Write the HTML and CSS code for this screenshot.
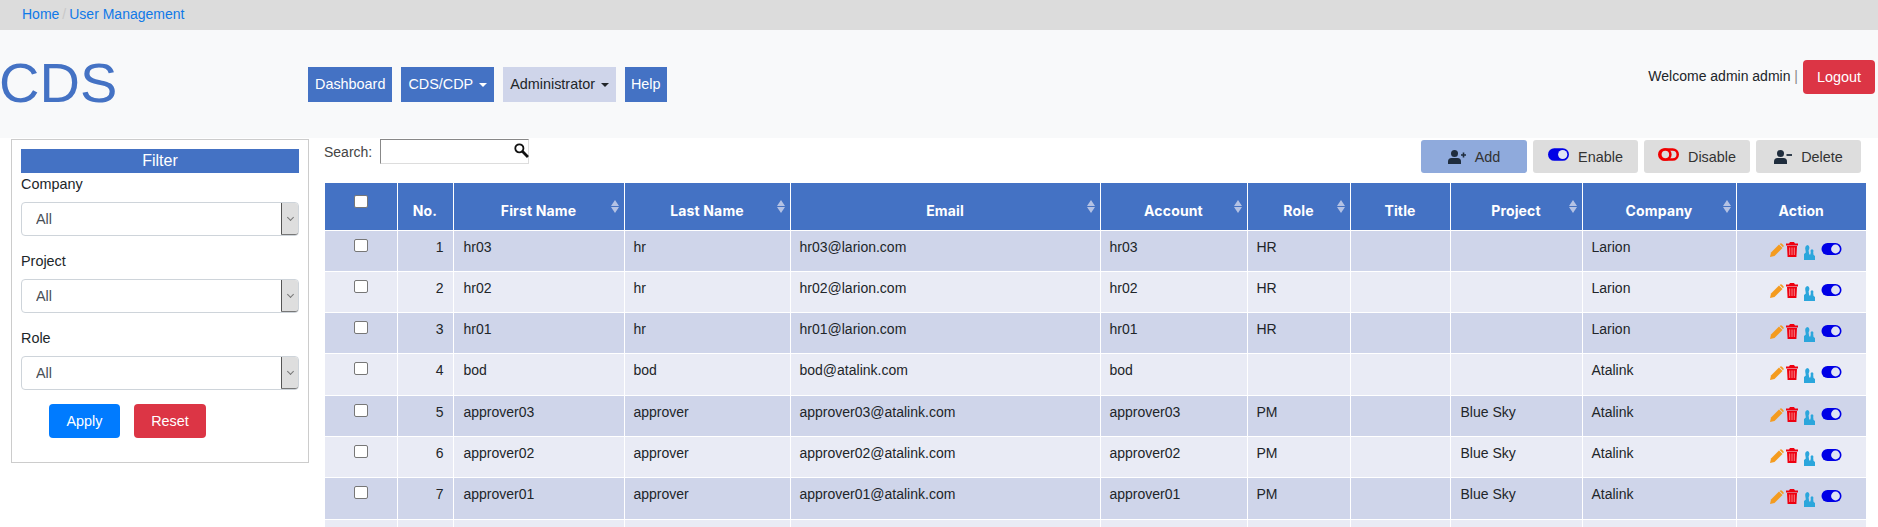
FILE: index.html
```html
<!DOCTYPE html>
<html lang="en">
<head>
    <meta charset="UTF-8">
    <title>User Management</title>
    <link rel="stylesheet" href="styles.css">
</head>
<body>
    <svg class="sprites" width="0" height="0">
        <symbol id="icon-pencil" viewBox="0 0 14 14">
            <path d="M0 14 L1 9.5 L9 1.5 L12.5 5 L4.5 13 Z" fill="#f49b1f"/>
            <path d="M10 .8 Q11 -.2 12 .8 L13.2 2 Q14.2 3 13.2 4 L13 4.3 L9.7 1 Z" fill="#f49b1f"/>
        </symbol>
        <symbol id="icon-trash" viewBox="0 0 12 15">
            <path d="M4 0 H8 L9 1.5 H12 V3.4 H0 V1.5 H3 Z M1 4 H11 L10.4 15 H1.6 Z" fill="#ee0010"/>
            <path d="M3.7 5.5 V13 M6 5.5 V13 M8.3 5.5 V13" stroke="#f7a4a8" stroke-width=".8"/>
        </symbol>
        <symbol id="icon-users" viewBox="0 0 11 15">
            <path d="M3.2 0 Q5.4 0 5.4 2.6 Q5.4 4.2 4.6 5.6 L5.2 9.5 H6.4 L6.8 7 Q6.2 5.6 7 4.8 Q8 3.8 9 4.8 Q9.8 5.6 9.2 7 L9.5 9.8 L11 11 V15 H0 V9 L1.8 7.4 Q1.6 5.4 1.3 4.2 Q.7 1 3.2 0 Z" fill="#2ba6dc"/>
        </symbol>
        <symbol id="icon-toggle" viewBox="0 0 20 12">
            <rect width="20" height="12" rx="6" fill="#0000e6"/>
            <circle cx="14" cy="6" r="4.4" fill="#dfe3f4"/>
        </symbol>
        <symbol id="icon-toggle-off" viewBox="0 0 20 12">
            <rect x="1.2" y="1.2" width="17.6" height="9.6" rx="4.8" fill="none" stroke="#f00000" stroke-width="2.4"/>
            <circle cx="7" cy="6" r="4.8" fill="#dddddd" stroke="#f00000" stroke-width="2.4"/>
        </symbol>
        <symbol id="icon-user-plus" viewBox="0 0 18 14">
            <circle cx="6.5" cy="3.5" r="3.5" fill="#1f2d3d"/>
            <path d="M0 14 V11.5 Q0 8 3.5 8 H9.5 Q13 8 13 11.5 V14 Z" fill="#1f2d3d"/>
            <path d="M13 5 H18 M15.5 2.5 V7.5" stroke="#1f2d3d" stroke-width="1.6"/>
        </symbol>
        <symbol id="icon-user-minus" viewBox="0 0 18 14">
            <circle cx="6.5" cy="3.5" r="3.5" fill="#1f2d3d"/>
            <path d="M0 14 V11.5 Q0 8 3.5 8 H9.5 Q13 8 13 11.5 V14 Z" fill="#1f2d3d"/>
            <path d="M12.5 5 H18" stroke="#1f2d3d" stroke-width="1.8"/>
        </symbol>
    </svg>

    <div class="breadcrumb">
        <a href="#">Home</a>
        <span class="divider">/</span>
        <a href="#">User Management</a>
    </div>

    <header class="topbar">
        <div class="logo">CDS</div>
        <nav class="menu">
            <a class="menu-item" href="#">Dashboard</a>
            <a class="menu-item caret" href="#">CDS/CDP</a>
            <a class="menu-item caret active" href="#">Administrator</a>
            <a class="menu-item menu-help" href="#">Help</a>
        </nav>
        <div class="welcome">
            <span class="welcome-text">Welcome admin admin <span class="sep">|</span></span>
            <button class="btn btn-red logout">Logout</button>
        </div>
    </header>

    <main class="main">
        <aside class="filter">
            <div class="filter-title">Filter</div>
            <label class="filter-label">Company</label>
            <div class="select-wrap"><select><option>All</option></select><span class="select-arrow"></span></div>
            <label class="filter-label">Project</label>
            <div class="select-wrap"><select><option>All</option></select><span class="select-arrow"></span></div>
            <label class="filter-label">Role</label>
            <div class="select-wrap"><select><option>All</option></select><span class="select-arrow"></span></div>
            <div class="filter-actions">
                <button class="btn btn-blue">Apply</button>
                <button class="btn btn-red">Reset</button>
            </div>
        </aside>

        <section class="content">
            <div class="tools">
                <div class="search">
                    <label>Search:</label>
                    <div class="search-box">
                        <input type="text">
                        <svg class="search-icon" viewBox="0 0 14 14" width="15" height="15">
                            <circle cx="5" cy="5" r="3.8" fill="none" stroke="#111" stroke-width="1.7"/>
                            <path d="M8 8 L13 13" stroke="#111" stroke-width="2.6"/>
                        </svg>
                    </div>
                </div>
                <div class="tool-buttons">
                    <button class="tool tool-add"><svg class="tool-icon"><use href="#icon-user-plus"/></svg>Add</button>
                    <button class="tool"><svg class="toggle-icon"><use href="#icon-toggle"/></svg>Enable</button>
                    <button class="tool"><svg class="toggle-icon"><use href="#icon-toggle-off"/></svg>Disable</button>
                    <button class="tool"><svg class="tool-icon"><use href="#icon-user-minus"/></svg>Delete</button>
                </div>
            </div>

            <table class="users">
                <colgroup>
                    <col class="c-check"><col class="c-no"><col class="c-first"><col class="c-last"><col class="c-email"><col class="c-account"><col class="c-role"><col class="c-title"><col class="c-project"><col class="c-company"><col class="c-action">
                </colgroup>
                <thead>
                    <tr>
                        <th class="check-head"><input type="checkbox"></th>
                        <th>No.</th>
                        <th class="sort">First Name</th>
                        <th class="sort">Last Name</th>
                        <th class="sort">Email</th>
                        <th class="sort">Account</th>
                        <th class="sort">Role</th>
                        <th>Title</th>
                        <th class="sort">Project</th>
                        <th class="sort">Company</th>
                        <th>Action</th>
                    </tr>
                </thead>
                <tbody>
                    <tr>
                        <td class="check"><input type="checkbox"></td><td class="num">1</td><td>hr03</td><td>hr</td><td>hr03@larion.com</td><td>hr03</td><td>HR</td><td></td><td></td><td>Larion</td>
                        <td class="actions"><svg class="a-pencil"><use href="#icon-pencil"/></svg><svg class="a-trash"><use href="#icon-trash"/></svg><svg class="a-users"><use href="#icon-users"/></svg><svg class="a-toggle"><use href="#icon-toggle"/></svg></td>
                    </tr>
                    <tr>
                        <td class="check"><input type="checkbox"></td><td class="num">2</td><td>hr02</td><td>hr</td><td>hr02@larion.com</td><td>hr02</td><td>HR</td><td></td><td></td><td>Larion</td>
                        <td class="actions"><svg class="a-pencil"><use href="#icon-pencil"/></svg><svg class="a-trash"><use href="#icon-trash"/></svg><svg class="a-users"><use href="#icon-users"/></svg><svg class="a-toggle"><use href="#icon-toggle"/></svg></td>
                    </tr>
                    <tr>
                        <td class="check"><input type="checkbox"></td><td class="num">3</td><td>hr01</td><td>hr</td><td>hr01@larion.com</td><td>hr01</td><td>HR</td><td></td><td></td><td>Larion</td>
                        <td class="actions"><svg class="a-pencil"><use href="#icon-pencil"/></svg><svg class="a-trash"><use href="#icon-trash"/></svg><svg class="a-users"><use href="#icon-users"/></svg><svg class="a-toggle"><use href="#icon-toggle"/></svg></td>
                    </tr>
                    <tr>
                        <td class="check"><input type="checkbox"></td><td class="num">4</td><td>bod</td><td>bod</td><td>bod@atalink.com</td><td>bod</td><td></td><td></td><td></td><td>Atalink</td>
                        <td class="actions"><svg class="a-pencil"><use href="#icon-pencil"/></svg><svg class="a-trash"><use href="#icon-trash"/></svg><svg class="a-users"><use href="#icon-users"/></svg><svg class="a-toggle"><use href="#icon-toggle"/></svg></td>
                    </tr>
                    <tr>
                        <td class="check"><input type="checkbox"></td><td class="num">5</td><td>approver03</td><td>approver</td><td>approver03@atalink.com</td><td>approver03</td><td>PM</td><td></td><td>Blue Sky</td><td>Atalink</td>
                        <td class="actions"><svg class="a-pencil"><use href="#icon-pencil"/></svg><svg class="a-trash"><use href="#icon-trash"/></svg><svg class="a-users"><use href="#icon-users"/></svg><svg class="a-toggle"><use href="#icon-toggle"/></svg></td>
                    </tr>
                    <tr>
                        <td class="check"><input type="checkbox"></td><td class="num">6</td><td>approver02</td><td>approver</td><td>approver02@atalink.com</td><td>approver02</td><td>PM</td><td></td><td>Blue Sky</td><td>Atalink</td>
                        <td class="actions"><svg class="a-pencil"><use href="#icon-pencil"/></svg><svg class="a-trash"><use href="#icon-trash"/></svg><svg class="a-users"><use href="#icon-users"/></svg><svg class="a-toggle"><use href="#icon-toggle"/></svg></td>
                    </tr>
                    <tr>
                        <td class="check"><input type="checkbox"></td><td class="num">7</td><td>approver01</td><td>approver</td><td>approver01@atalink.com</td><td>approver01</td><td>PM</td><td></td><td>Blue Sky</td><td>Atalink</td>
                        <td class="actions"><svg class="a-pencil"><use href="#icon-pencil"/></svg><svg class="a-trash"><use href="#icon-trash"/></svg><svg class="a-users"><use href="#icon-users"/></svg><svg class="a-toggle"><use href="#icon-toggle"/></svg></td>
                    </tr>
                    <tr>
                        <td></td><td></td><td></td><td></td><td></td><td></td><td></td><td></td><td></td><td></td><td></td>
                    </tr>
                </tbody>
            </table>
        </section>
    </main>
</body>
</html>
```

FILE: styles.css
```css
html, body {
    height: 527px;
    overflow: hidden;
}

body {
    margin: 0;
    font-family: "Liberation Sans", Arial, sans-serif;
    font-size: 14px;
    color: #212529;
    background-color: #fff;
}

.sprites {
    position: absolute;
}

button {
    font-family: inherit;
    cursor: pointer;
}

/* breadcrumb */
.breadcrumb {
    height: 30px;
    padding-left: 22px;
    background-color: #dcdcdc;
    display: flex;
    align-items: center;
    gap: 3px;
    font-size: 14px;
    padding-bottom: 2px;
    box-sizing: border-box;
}

.breadcrumb a {
    color: #0f79e8;
    text-decoration: none;
}

.breadcrumb .divider {
    color: #c8c8c8;
}

/* header */
.topbar {
    height: 108px;
    background-color: #f8f9fa;
    display: flex;
    position: relative;
}

.logo {
    width: 309px;
    margin-left: -1px;
    font-size: 56px;
    line-height: 67px;
    padding-top: 19px;
    color: #4472c4;
}

.menu {
    display: flex;
    gap: 9px;
    padding-top: 37px;
    align-items: flex-start;
}

.menu-item {
    height: 35px;
    line-height: 35px;
    padding: 0 7px;
    background-color: #4472c4;
    color: #fff;
    text-decoration: none;
    font-size: 14.4px;
}

.menu-item.active {
    background-color: #cfd5ea;
    color: #212529;
}

.menu-help {
    padding: 0 6px;
}

.caret::after {
    content: "";
    display: inline-block;
    margin-left: 6px;
    vertical-align: 2px;
    border-top: 4px solid;
    border-left: 4px solid transparent;
    border-right: 4px solid transparent;
}

.welcome {
    margin-left: auto;
    padding: 30px 3px 0 0;
    display: flex;
    align-items: flex-start;
    gap: 5px;
}

.welcome-text {
    font-size: 14px;
    line-height: 32px;
}

.welcome-text .sep {
    color: #888;
}

.btn {
    height: 34px;
    border: none;
    border-radius: 4px;
    color: #fff;
    font-size: 14.4px;
    padding: 0;
}

.btn-red {
    background-color: #dc3545;
    width: 72px;
}

.btn-blue {
    background-color: #007bff;
    width: 71px;
}

/* main */
.main {
    display: flex;
    align-items: flex-start;
}

.filter {
    width: 298px;
    height: 324px;
    box-sizing: border-box;
    margin: 1px 0 0 11px;
    padding: 9px 9px 0;
    border: 1px solid #ccc;
}

.filter-title {
    height: 24px;
    line-height: 24px;
    background-color: #4472c4;
    color: #fff;
    text-align: center;
    font-size: 16px;
}

.filter-label {
    display: block;
    height: 29px;
    padding-top: 2px;
    line-height: 18px;
    box-sizing: border-box;
    font-size: 14.4px;
}

.select-wrap + .filter-label {
    margin-top: 16px;
    height: 27px;
    padding-top: 0;
}

.select-wrap {
    position: relative;
    height: 34px;
}

.select-wrap select {
    appearance: none;
    width: 100%;
    height: 100%;
    padding: 0 14px;
    border: 1px solid #ced4da;
    border-radius: 4px;
    background-color: #fff;
    color: #495057;
    font-family: inherit;
    font-size: 14.4px;
}

.select-arrow {
    position: absolute;
    top: 1px;
    right: 1px;
    width: 16px;
    height: 31px;
    background-color: #dedede;
    border-left: 1px solid #555;
    border-bottom: 1px solid #777;
    border-radius: 0 3px 3px 0;
}

.select-arrow::after {
    content: "";
    position: absolute;
    top: 12px;
    left: 6px;
    width: 4px;
    height: 4px;
    border-right: 1px solid #777;
    border-bottom: 1px solid #777;
    transform: rotate(45deg);
}

.filter-actions {
    display: flex;
    gap: 14px;
    padding: 14px 0 0 28px;
}

.content {
    width: 1541px;
    margin-left: 16px;
}

.tools {
    height: 45px;
    display: flex;
    justify-content: space-between;
    align-items: flex-start;
}

.search {
    display: flex;
    align-items: center;
    gap: 8px;
    padding-top: 1px;
    margin-left: -1px;
    color: #444;
}

.search label {
    font-size: 14px;
}

.search-box {
    position: relative;
    width: 149px;
    height: 25px;
}

.search-box input {
    width: 100%;
    height: 100%;
    box-sizing: border-box;
    border: 1px solid #ddd;
    border-top-color: #888;
    border-left-color: #888;
    background-color: #fff;
    padding: 0;
}

.search-icon {
    position: absolute;
    top: 4px;
    right: 0;
}

.tool-buttons {
    display: flex;
    gap: 6px;
    padding: 2px 5px 0 0;
}

.tool {
    width: 106px;
    height: 33px;
    border: none;
    border-radius: 3px;
    background-color: #dddddd;
    color: #333;
    font-size: 14.4px;
    padding: 0;
    display: flex;
    align-items: center;
    justify-content: center;
    gap: 9px;
}

.tool:nth-child(even) {
    width: 105px;
}

.tool-add {
    background-color: #8faadc;
}

.tool-icon {
    width: 18px;
    height: 14px;
}

.toggle-icon {
    width: 21px;
    height: 13px;
    margin-top: -4px;
}

/* table */
.users {
    width: 1541px;
    table-layout: fixed;
    border-collapse: collapse;
}

.c-check { width: 72px; }
.c-no { width: 56px; }
.c-first { width: 171px; }
.c-last { width: 166px; }
.c-email { width: 310px; }
.c-account { width: 147px; }
.c-role { width: 103px; }
.c-title { width: 100px; }
.c-project { width: 132px; }
.c-company { width: 154px; }
.c-action { width: 130px; }

.users th {
    height: 47px;
    padding: 8px 10px 0;
    box-sizing: border-box;
    background-color: #4472c4;
    color: #fff;
    border: 1px solid #fff;
    border-top: none;
    font-family: "Inter", "Liberation Sans", sans-serif;
    font-size: 14px;
    font-weight: 700;
    letter-spacing: .15px;
    position: relative;
}

.users th:first-child,
.users td:first-child {
    border-left: none;
}

.users th:last-child,
.users td:last-child {
    border-right: none;
}

.users th.sort::before,
.users th.sort::after {
    content: "";
    position: absolute;
    right: 5px;
    border-left: 4px solid transparent;
    border-right: 4px solid transparent;
}

.users th.sort::before {
    top: 17px;
    border-bottom: 6px solid #b4c2e4;
}

.users th.sort::after {
    top: 24px;
    border-top: 6px solid #b4c2e4;
}

.users th.check-head {
    padding: 0;
    vertical-align: top;
}

.users input[type="checkbox"] {
    appearance: none;
    margin: 0;
    width: 14px;
    height: 13px;
    display: block;
    box-sizing: border-box;
    background-color: #fff;
    border: 1px solid #777;
    border-radius: 2px;
}

.users .check-head input[type="checkbox"] {
    margin: 12px auto 0;
}

.users td {
    height: 41.3px;
    box-sizing: border-box;
    padding: 8px 9px 0;
    vertical-align: top;
    border: 1px solid #fff;
    line-height: 17px;
    font-size: 14px;
    color: #212529;
}

.users td:nth-child(3),
.users td:nth-child(9) {
    padding-left: 10px;
}

.users tbody tr:nth-child(odd) td {
    background-color: #cfd5ea;
}

.users tbody tr:nth-child(even) td {
    background-color: #e9ebf5;
}

.users td.check {
    padding: 8px 0 0 29px;
}

.users td.num {
    text-align: right;
    padding-right: 9px;
}

.users td.actions {
    padding: 0;
    font-size: 0;
}

.actions svg {
    display: inline-block;
    vertical-align: top;
}

.a-pencil { width: 14px; height: 14px; margin: 12px 2px 0 33px; }
.a-trash { width: 12px; height: 15px; margin: 11px 6px 0 0; }
.a-users { width: 11px; height: 15px; margin: 14px 6px 0 0; }
.a-toggle { width: 21px; height: 12px; margin: 12px 0 0 0; }
```
